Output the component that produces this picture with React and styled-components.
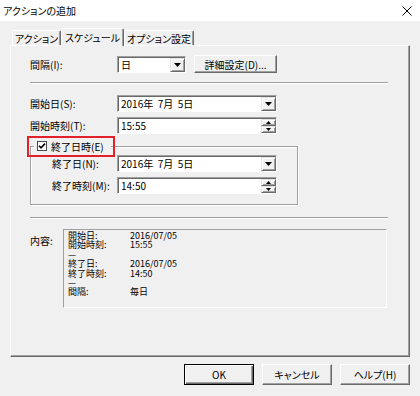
import React from "react";
import styled, { createGlobalStyle } from "styled-components";

const GlobalStyle = createGlobalStyle`
  html, body {
    margin: 0;
    padding: 0;
    background: #f0f0f0;
  }
  body {
    font-family: "Noto Sans CJK JP", "Liberation Sans", sans-serif;
    font-size: 10px;
    color: #000;
    font-feature-settings: "palt";
  }
`;

const Window = styled.div`
  width: 420px;
  height: 396px;
  display: flex;
  flex-direction: column;
  background: #f0f0f0;
  overflow: hidden;
`;

const TitleBar = styled.div`
  height: 21px;
  flex-shrink: 0;
  background: #fff;
  display: flex;
  align-items: center;
  justify-content: space-between;
  padding: 0 8px 0 3px;
  font-size: 10px;
`;

const CloseIcon = styled.svg`
  width: 10px;
  height: 10px;
`;

const Body = styled.div`
  flex: 1;
  display: flex;
  flex-direction: column;
  padding: 7px 10px 0;
`;

const TabStrip = styled.div`
  display: flex;
  align-items: flex-end;
  height: 17px;
  padding-left: 2px;
  position: relative;
  z-index: 1;
`;

const Tab = styled.div`
  box-sizing: border-box;
  width: ${(p) => p.$w}px;
  height: ${(p) => (p.$active ? 18 : 15)}px;
  margin-bottom: ${(p) => (p.$active ? -1 : 0)}px;
  display: flex;
  align-items: center;
  justify-content: center;
  background: #f0f0f0;
  border: 1px solid;
  border-bottom: none;
  border-color: #fff #696969 transparent #fff;
  border-radius: 2px 2px 0 0;
  box-shadow: inset -1px 0 0 #a0a0a0;
  white-space: nowrap;
`;

const Panel = styled.div`
  box-sizing: border-box;
  height: 312px;
  display: flex;
  flex-direction: column;
  padding: 9px 21px 0 19px;
  border: 1px solid;
  border-color: #fff #696969 #696969 #fff;
  box-shadow: inset -1px -1px 0 #a0a0a0;
`;

const Row = styled.div`
  display: flex;
  align-items: center;
  height: ${(p) => p.$h || 17}px;
  margin-top: ${(p) => p.$mt || 0}px;
`;

const Label = styled.div`
  width: ${(p) => p.$w}px;
  flex-shrink: 0;
  white-space: nowrap;
`;

const Separator = styled.div`
  height: 0;
  margin-top: ${(p) => p.$mt}px;
  border-top: 1px solid #a0a0a0;
  border-bottom: 1px solid #fff;
`;

const Field = styled.div`
  box-sizing: border-box;
  width: ${(p) => p.$w}px;
  height: 17px;
  display: flex;
  background: #fff;
  border: 1px solid;
  border-color: #a0a0a0 #fff #fff #a0a0a0;
  box-shadow: inset 1px 1px 0 #696969;
`;

const FieldText = styled.div`
  flex: 1;
  display: flex;
  align-items: center;
  padding-left: 3px;
  white-space: pre;
`;

const ArrowButton = styled.div`
  box-sizing: border-box;
  width: 15px;
  flex: 1;
  display: flex;
  align-items: center;
  justify-content: center;
  background: #f0f0f0;
  border: 1px solid;
  border-color: #e3e3e3 #696969 #696969 #e3e3e3;
  box-shadow: inset 1px 1px 0 #fff, inset -1px -1px 0 #a0a0a0;
`;

const ArrowColumn = styled.div`
  display: flex;
  flex-direction: column;
  width: 15px;
  margin-top: 1px;
`;

const DetailButtonGap = styled.div`
  width: 8px;
`;

const GroupBox = styled.div`
  box-sizing: border-box;
  width: 268px;
  margin-top: 12px;
  display: flex;
  flex-direction: column;
  padding: 0 19px 10px 21px;
  border: 1px solid #a0a0a0;
  box-shadow: 1px 1px 0 #fff, inset 1px 1px 0 #fff;
`;

const GroupTitle = styled.div`
  position: relative;
  align-self: flex-start;
  height: 12px;
  margin: -7px 0 0 -18px;
  padding: 0 7px 0 3px;
  display: flex;
  align-items: center;
  gap: 4px;
  background: #f0f0f0;

  &::after {
    content: "";
    position: absolute;
    left: -7px;
    right: -4px;
    top: -4px;
    bottom: -5px;
    border: 2px solid #e3202a;
  }
`;

const CheckBox = styled.span`
  box-sizing: border-box;
  width: 10px;
  height: 10px;
  display: inline-flex;
  align-items: center;
  justify-content: center;
  background: #fff;
  border: 1px solid #4a4a4a;
`;

const SummaryRow = styled.div`
  display: flex;
  margin-top: 10px;
`;

const SummaryBox = styled.div`
  box-sizing: border-box;
  width: 324px;
  height: 79px;
  display: grid;
  grid-template-columns: 62px auto;
  align-content: start;
  padding: 1px 4px;
  font-size: 9px;
  line-height: 9.4px;
  border: 1px solid;
  border-color: #a0a0a0 #fff #fff #a0a0a0;
`;

const SummaryLabel = styled.div`
  padding-top: 4px;
  width: 33px;
  flex-shrink: 0;
`;

const ButtonBar = styled.div`
  display: flex;
  justify-content: flex-end;
  gap: 8px;
  margin-top: 7px;
`;

const Button = styled.button`
  box-sizing: border-box;
  width: ${(p) => p.$w || 70}px;
  height: ${(p) => p.$h || 21}px;
  padding: 0;
  margin: 0;
  font: inherit;
  color: #000;
  background: #f0f0f0;
  border: 1px solid;
  border-color: ${(p) =>
    p.$default ? "#000" : "#fff #696969 #696969 #fff"};
  box-shadow: ${(p) =>
    p.$default
      ? "inset 1px 1px 0 #fff, inset -1px -1px 0 #696969, inset -2px -2px 0 #a0a0a0"
      : "inset -1px -1px 0 #a0a0a0"};
  white-space: nowrap;
`;

const DownArrow = ({ w = 7, h = 4 }) => (
  <svg width={w} height={h} viewBox={`0 0 ${w} ${h}`}>
    <polygon points={`0,0 ${w},0 ${w / 2},${h}`} fill="#000" />
  </svg>
);

const UpArrow = ({ w = 5, h = 3 }) => (
  <svg width={w} height={h} viewBox={`0 0 ${w} ${h}`}>
    <polygon points={`0,${h} ${w},${h} ${w / 2},0`} fill="#000" />
  </svg>
);

const ComboBox = ({ width, value }) => (
  <Field $w={width}>
    <FieldText>{value}</FieldText>
    <ArrowColumn>
      <ArrowButton>
        <DownArrow />
      </ArrowButton>
    </ArrowColumn>
  </Field>
);

const SpinBox = ({ width, value }) => (
  <Field $w={width}>
    <FieldText>{value}</FieldText>
    <ArrowColumn>
      <ArrowButton>
        <UpArrow />
      </ArrowButton>
      <ArrowButton>
        <DownArrow w={5} h={3} />
      </ArrowButton>
    </ArrowColumn>
  </Field>
);

const summary = [
  ["開始日:", "2016/07/05"],
  ["開始時刻:", "15:55"],
  ["—", ""],
  ["終了日:", "2016/07/05"],
  ["終了時刻:", "14:50"],
  ["—", ""],
  ["間隔:", "毎日"],
];

export default function App() {
  return (
    <Window>
      <GlobalStyle />
      <TitleBar>
        <span>アクションの追加</span>
        <CloseIcon viewBox="0 0 10 10">
          <path d="M0.5 0.5 L9.5 9.5 M9.5 0.5 L0.5 9.5" stroke="#000" strokeWidth="1" />
        </CloseIcon>
      </TitleBar>

      <Body>
        <TabStrip>
          <Tab $w={49}>アクション</Tab>
          <Tab $w={63} $active>
            スケジュール
          </Tab>
          <Tab $w={70}>オプション設定</Tab>
        </TabStrip>

        <Panel>
          <Row $h={18}>
            <Label $w={87}>間隔(I):</Label>
            <ComboBox width={69} value="日" />
            <DetailButtonGap />
            <Button $w={83} $h={18}>
              詳細設定(D)...
            </Button>
          </Row>

          <Separator $mt={9} />

          <Row $mt={11}>
            <Label $w={87}>開始日(S):</Label>
            <ComboBox width={160} value="2016年  7月  5日" />
          </Row>
          <Row $mt={5}>
            <Label $w={87}>開始時刻(T):</Label>
            <SpinBox width={160} value="15:55" />
          </Row>

          <GroupBox>
            <GroupTitle>
              <CheckBox>
                <svg width="8" height="8" viewBox="0 0 8 8">
                  <path d="M1 3.8 L3 5.8 L7 1.6" stroke="#000" strokeWidth="1.6" fill="none" />
                </svg>
              </CheckBox>
              終了日時(E)
            </GroupTitle>
            <Row $mt={3}>
              <Label $w={65}>終了日(N):</Label>
              <ComboBox width={160} value="2016年  7月  5日" />
            </Row>
            <Row $mt={5}>
              <Label $w={65}>終了時刻(M):</Label>
              <SpinBox width={160} value="14:50" />
            </Row>
          </GroupBox>

          <Separator $mt={12} />

          <SummaryRow>
            <SummaryLabel>内容:</SummaryLabel>
            <SummaryBox>
              {summary.map(([k, v], i) => (
                <React.Fragment key={i}>
                  <div>{k}</div>
                  <div>{v}</div>
                </React.Fragment>
              ))}
            </SummaryBox>
          </SummaryRow>
        </Panel>

        <ButtonBar>
          <Button $default>OK</Button>
          <Button>キャンセル</Button>
          <Button>ヘルプ(H)</Button>
        </ButtonBar>
      </Body>
    </Window>
  );
}
